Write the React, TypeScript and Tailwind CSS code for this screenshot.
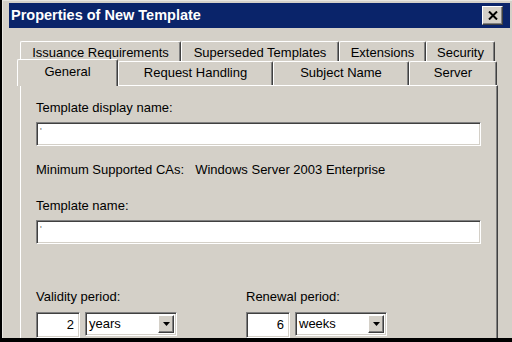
import { useState } from 'react';

const font = { fontFamily: '"Liberation Sans", Arial, sans-serif' };

const raised =
  'border border-t-white border-l-white border-r-[#404040] border-b-[#404040] shadow-[inset_-1px_-1px_0_#808080]';
const sunken =
  'border border-t-[#808080] border-l-[#808080] border-r-white border-b-white shadow-[inset_1px_1px_0_#404040,inset_-1px_-1px_0_#d4d0c8]';

function BackTab({ label, width }: { label: string; width: string }) {
  return (
    <div
      className={`${width} h-[21px] flex items-center justify-center border-t border-l border-t-white border-l-white border-r border-r-[#404040] shadow-[inset_-1px_0_0_#808080] rounded-t-[2px] text-[13px] text-black leading-none`}
    >
      {label}
    </div>
  );
}

function FrontTab({ label, width, selected }: { label: string; width: string; selected?: boolean }) {
  if (selected) {
    return (
      <div
        className={`${width} h-[27px] -mb-[1px] relative z-10 bg-[#d4d0c8] flex items-start justify-center pt-[5px] border-t border-l border-t-white border-l-white border-r border-r-[#404040] shadow-[inset_-1px_0_0_#808080] rounded-t-[2px] text-[13px] text-black leading-none`}
      >
        {label}
      </div>
    );
  }
  return (
    <div
      className={`${width} h-[24px] flex items-start justify-center pt-[4px] border-t border-l border-t-white border-l-white border-r border-r-[#404040] shadow-[inset_-1px_0_0_#808080] rounded-t-[2px] text-[13px] text-black leading-none`}
    >
      {label}
    </div>
  );
}

function TextBox() {
  return (
    <div className={`w-[445px] h-[24px] bg-white ${sunken} flex items-center pl-[3px]`}>
      <span className="text-[9px] text-[#606060] leading-none -mt-[6px]">'</span>
    </div>
  );
}

function Period({ label, num, unit }: { label: string; num: string; unit: string }) {
  const [value] = useState(unit);
  return (
    <div className="flex flex-col">
      <div className="h-[15px] leading-[15px] text-[13px] text-black">{label}</div>
      <div className="flex mt-[8px] gap-[5px]">
        <div className={`w-[44px] h-[26px] bg-white ${sunken} flex items-center justify-end pr-[5px] text-[13px] text-black`}>
          {num}
        </div>
        <div className={`w-[92px] h-[24px] bg-white ${sunken} flex items-center justify-between pl-[3px] pr-[2px] text-[13px] text-black`}>
          <span>{value}</span>
          <div className={`w-[16px] h-[18px] bg-[#d4d0c8] ${raised} flex items-center justify-center`}>
            <svg width="7" height="4" viewBox="0 0 7 4">
              <path d="M0 0h7L3.5 4z" fill="#000" />
            </svg>
          </div>
        </div>
      </div>
    </div>
  );
}

export default function App() {
  return (
    <div className="w-[512px] h-[342px] bg-black overflow-hidden" style={font}>
      <div className="ml-[2px] h-[338px] bg-[#d4d0c8] border-t border-l border-t-[#e8e6e0] border-l-[#e8e6e0] pt-[2px] pl-[6px] pr-[2px] flex flex-col">
        {/* Title bar */}
        <div className="h-[25px] bg-[#0a246a] flex items-center justify-between pl-[2px] pr-[7px]">
          <span className="text-white font-bold text-[14.5px] leading-none">Properties of New Template</span>
          <div className={`w-[21px] h-[19px] bg-[#d4d0c8] ${raised} flex items-center justify-center`}>
            <svg width="10" height="9" viewBox="0 0 10 9">
              <path d="M1 0.5l8 8M9 0.5l-8 8" stroke="#000" strokeWidth="2" />
            </svg>
          </div>
        </div>

        {/* Tabs */}
        <div className="ml-[11px] mt-[13px] flex">
          <BackTab label="Issuance Requirements" width="w-[161px]" />
          <BackTab label="Superseded Templates" width="w-[158px]" />
          <BackTab label="Extensions" width="w-[87px]" />
          <BackTab label="Security" width="w-[69px]" />
        </div>
        <div className="ml-[8px] -mt-[3px] flex items-end">
          <FrontTab label="General" width="w-[101px]" selected />
          <FrontTab label="Request Handling" width="w-[155px]" />
          <FrontTab label="Subject Name" width="w-[136px]" />
          <FrontTab label="Server" width="w-[88px]" />
        </div>

        {/* Panel */}
        <div className="ml-[11px] w-[478px] flex-1 border-t border-l border-t-white border-l-white border-r border-r-[#404040] shadow-[inset_-1px_0_0_#808080] pl-[15px] pt-[14px]">
          <div className="h-[15px] leading-[15px] text-[13px] text-black">Template display name:</div>
          <div className="mt-[7px]">
            <TextBox />
          </div>
          <div className="mt-[16px] h-[15px] leading-[15px] text-[13px] text-black flex">
            <span>Minimum Supported CAs:</span>
            <span className="ml-[11px]">Windows Server 2003 Enterprise</span>
          </div>
          <div className="mt-[21px] h-[15px] leading-[15px] text-[13px] text-black">Template name:</div>
          <div className="mt-[7px]">
            <TextBox />
          </div>
          <div className="mt-[45px] flex">
            <div className="w-[210px]">
              <Period label="Validity period:" num="2" unit="years" />
            </div>
            <Period label="Renewal period:" num="6" unit="weeks" />
          </div>
        </div>
      </div>
    </div>
  );
}
